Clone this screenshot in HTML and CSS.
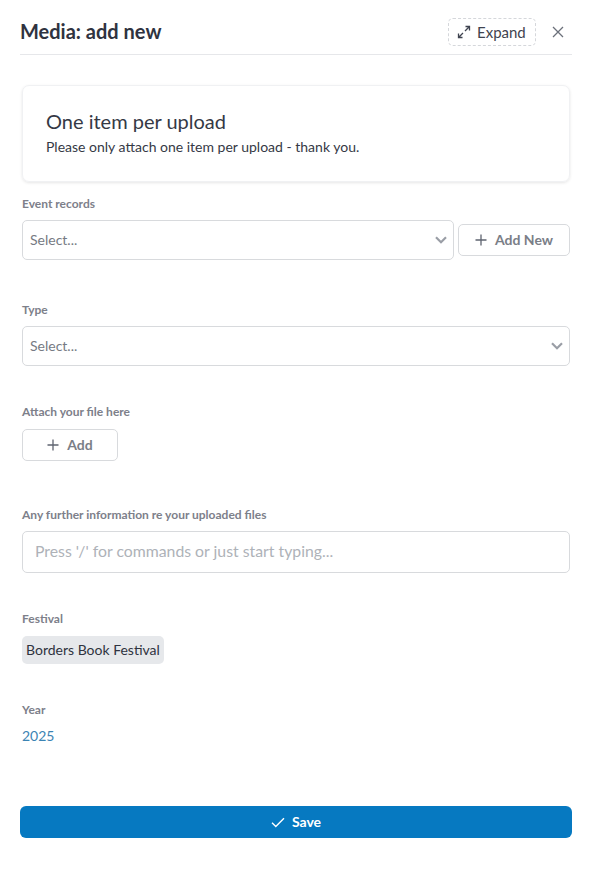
FILE: index.html
```html
<!DOCTYPE html>
<html lang="en">
<head>
<meta charset="UTF-8">
<meta name="viewport" content="width=device-width, initial-scale=1.0">
<title>Media: add new</title>
<link rel="stylesheet" href="styles.css">
</head>
<body>

<div class="header">
    <h1>Media: add new</h1>
    <button class="expand">
        <svg width="14" height="14" viewBox="0 0 14 14" fill="none" stroke="#3f4450" stroke-width="1.3"><path d="M8.5 1.5h4v4M12.5 1.5L8 6M5.5 12.5h-4v-4M1.5 12.5L6 8"/></svg>
        Expand
    </button>
    <button class="close">
        <svg width="12" height="12" viewBox="0 0 12 12" fill="none" stroke="#6b707a" stroke-width="1.3"><path d="M1 1l10 10M11 1L1 11"/></svg>
    </button>
</div>

<div class="form">
    <div class="notice">
        <h2>One item per upload</h2>
        <p>Please only attach one item per upload - thank you.</p>
    </div>

    <div class="field field-event">
        <label>Event records</label>
        <div class="select-row">
            <div class="select">
                <span>Select...</span>
                <svg width="12" height="8" viewBox="0 0 12 8" fill="none" stroke="#9a9ea6" stroke-width="2.2"><path d="M1 1.2l5 5 5-5"/></svg>
            </div>
            <button class="btn btn-new">
                <svg width="12" height="12" viewBox="0 0 12 12" fill="none" stroke="#5f6470" stroke-width="1.3"><path d="M6 0.5v11M0.5 6h11"/></svg>
                <span>Add New</span>
            </button>
        </div>
    </div>

    <div class="field field-type">
        <label>Type</label>
        <div class="select">
            <span>Select...</span>
            <svg width="12" height="8" viewBox="0 0 12 8" fill="none" stroke="#9a9ea6" stroke-width="2.2"><path d="M1 1.2l5 5 5-5"/></svg>
        </div>
    </div>

    <div class="field field-attach">
        <label>Attach your file here</label>
        <button class="btn btn-add">
            <svg width="12" height="12" viewBox="0 0 12 12" fill="none" stroke="#5f6470" stroke-width="1.3"><path d="M6 0.5v11M0.5 6h11"/></svg>
            <span>Add</span>
        </button>
    </div>

    <div class="field field-info">
        <label>Any further information re your uploaded files</label>
        <div class="editor"><span>Press '/' for commands or just start typing...</span></div>
    </div>

    <div class="field field-festival">
        <label>Festival</label>
        <span class="tag">Borders Book Festival</span>
    </div>

    <div class="field field-year">
        <label>Year</label>
        <a class="year" href="#">2025</a>
    </div>
</div>

<button class="save">
    <svg width="14" height="11" viewBox="0 0 14 11" fill="none" stroke="#fff" stroke-width="1.4"><path d="M1 5.8l3.8 3.8L13 1.2"/></svg>
    <span>Save</span>
</button>

</body>
</html>
```

FILE: styles.css
```css
body {
    font-family: "Lato", "Open Sans", sans-serif;
    background: #fff;
    color: #2f3340;
    margin: 0;
    padding: 0 23px 0 20px;
}

button {
    font-family: inherit;
    background: #fff;
    cursor: pointer;
}

.header {
    display: flex;
    align-items: center;
    height: 54px;
    border-bottom: 1px solid #e6e7ea;
    box-sizing: content-box;
}

.header h1 {
    flex: 1;
    margin: 0;
    font-size: 20px;
    font-weight: 700;
    color: #2f3340;
    padding-top: 7px;
}

.expand {
    display: flex;
    align-items: center;
    gap: 6px;
    width: 88px;
    height: 28px;
    margin-top: 10px;
    padding: 0 0 0 8px;
    border: 1px dashed #d5d7db;
    border-radius: 5px;
    font-size: 15px;
    color: #3f4450;
}

.close {
    display: flex;
    border: none;
    padding: 0;
    margin: 10px 8px 0 16px;
}

.form {
    padding: 0 2px;
}

.notice {
    height: 97px;
    margin-top: 30px;
    box-sizing: border-box;
    padding: 24px 23px 0;
    border: 1px solid #f0f1f3;
    border-radius: 7px;
    box-shadow: 0 1px 3px rgba(0, 0, 0, 0.1);
}

.notice h2 {
    margin: 0;
    font-size: 20px;
    font-weight: 400;
    line-height: 22px;
    color: #353945;
}

.notice p {
    margin: 6px 0 0;
    font-size: 14px;
    line-height: 18px;
    color: #353945;
}

.field label {
    display: block;
    font-size: 12px;
    font-weight: 700;
    line-height: 14px;
    color: #7d808a;
}

.field-event { margin-top: 15px; }
.field-type { margin-top: 43px; }
.field-attach { margin-top: 39px; }
.field-info { margin-top: 47px; }
.field-festival { margin-top: 39px; }
.field-year { margin-top: 39px; }

.select-row {
    display: flex;
    align-items: center;
    gap: 4px;
}

.select {
    flex: 1;
    display: flex;
    align-items: center;
    justify-content: space-between;
    height: 40px;
    box-sizing: border-box;
    margin-top: 9px;
    padding: 0 6px 0 7px;
    border: 1px solid #d8dadd;
    border-radius: 5px;
    font-size: 14px;
    color: #767a83;
}

.select span {
    padding-bottom: 2px;
}

.btn {
    display: flex;
    align-items: center;
    justify-content: center;
    gap: 8px;
    height: 32px;
    box-sizing: border-box;
    border: 1px solid #d8dadd;
    border-radius: 5px;
    font-size: 14px;
    font-weight: 700;
    color: #7a7e87;
}

.btn span {
    padding-bottom: 2px;
}

.btn-new {
    width: 112px;
    margin-top: 9px;
}

.btn-add {
    width: 96px;
    margin-top: 10px;
}

.editor {
    height: 42px;
    box-sizing: border-box;
    margin-top: 9px;
    padding: 0 12px;
    display: flex;
    align-items: center;
    border: 1px solid #d8dadd;
    border-radius: 5px;
    font-size: 15.8px;
    color: #aeb2b8;
}

.editor span {
    padding-bottom: 3px;
}

.tag {
    display: inline-block;
    margin-top: 10px;
    padding: 0 4px;
    height: 28px;
    line-height: 28px;
    background: #e6e8eb;
    border-radius: 5px;
    font-size: 14px;
    color: #2f3340;
}

.year {
    display: block;
    margin-top: 10px;
    font-size: 14px;
    line-height: 18px;
    color: #3b84b4;
    text-decoration: none;
}

.save {
    display: flex;
    align-items: center;
    justify-content: center;
    gap: 7px;
    width: 552px;
    height: 32px;
    margin-top: 61px;
    padding: 0;
    border: none;
    border-radius: 6px;
    background: #0679c1;
    color: #fff;
    font-size: 14px;
    font-weight: 700;
}

.save span {
    padding-bottom: 2px;
}
```
